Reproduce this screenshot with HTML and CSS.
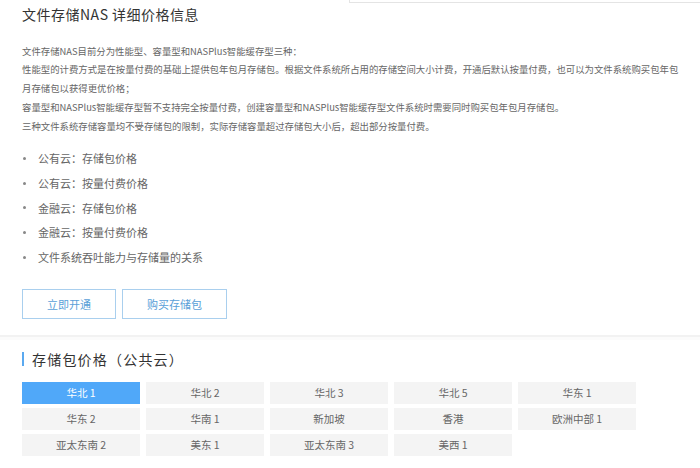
FILE: index.html
```html
<!DOCTYPE html>
<html lang="zh-CN">
<head>
<meta charset="utf-8">
<title>文件存储NAS 详细价格信息</title>
<link rel="stylesheet" href="styles.css">
</head>
<body>
<div class="top-strip"></div>
<div class="page">
  <h1 class="title">文件存储NAS 详细价格信息</h1>
  <div class="intro">
    <p>文件存储NAS目前分为性能型、容量型和NASPlus智能缓存型三种：</p>
    <p>性能型的计费方式是在按量付费的基础上提供包年包月存储包。根据文件系统所占用的存储空间大小计费，开通后默认按量付费，也可以为文件系统购买包年包月存储包以获得更优价格；</p>
    <p>容量型和NASPlus智能缓存型暂不支持完全按量付费，创建容量型和NASPlus智能缓存型文件系统时需要同时购买包年包月存储包。</p>
    <p>三种文件系统存储容量均不受存储包的限制，实际存储容量超过存储包大小后，超出部分按量付费。</p>
  </div>
  <ul class="links">
    <li>公有云：存储包价格</li>
    <li>公有云：按量付费价格</li>
    <li>金融云：存储包价格</li>
    <li>金融云：按量付费价格</li>
    <li>文件系统吞吐能力与存储量的关系</li>
  </ul>
  <div class="actions">
    <a class="btn">立即开通</a>
    <a class="btn">购买存储包</a>
  </div>
</div>
<div class="divider"></div>
<div class="page">
  <h2 class="section-title">存储包价格（公共云）</h2>
  <div class="regions">
    <div class="region active">华北 1</div>
    <div class="region">华北 2</div>
    <div class="region">华北 3</div>
    <div class="region">华北 5</div>
    <div class="region">华东 1</div>
    <div class="region">华东 2</div>
    <div class="region">华南 1</div>
    <div class="region">新加坡</div>
    <div class="region">香港</div>
    <div class="region">欧洲中部 1</div>
    <div class="region">亚太东南 2</div>
    <div class="region">美东 1</div>
    <div class="region">亚太东南 3</div>
    <div class="region">美西 1</div>
  </div>
</div>
</body>
</html>
```

FILE: styles.css
```css
html, body {
  margin: 0;
  padding: 0;
  background: #fff;
}
body {
  font-family: "Noto Sans CJK SC", "Noto Sans", sans-serif;
  color: #666;
  overflow: hidden;
}
.top-strip {
  margin-left: 349px;
  height: 2px;
  border-left: 1px solid #e4e4e4;
  border-bottom: 1px solid #e4e4e4;
}
.page {
  padding-left: 22px;
}
.title {
  margin: 1px 0 0;
  font-size: 14px;
  letter-spacing: 0.5px;
  line-height: 20px;
  font-weight: normal;
  color: #333;
}
.intro {
  margin-top: 17.6px;
  width: 664px;
  font-size: 9.4px;
  line-height: 18.8px;
  color: #666;
}
.intro p {
  margin: 0;
}
.links {
  list-style: none;
  margin: 10.8px 0 0;
  padding: 0;
  font-size: 11px;
  line-height: 24.6px;
  color: #666;
}
.links li {
  display: flex;
  align-items: center;
  gap: 12px;
}
.links li::before {
  content: "";
  width: 3px;
  height: 3px;
  border-radius: 50%;
  background: #888;
  margin-left: 1px;
}
.actions {
  display: flex;
  gap: 6px;
  margin-top: 19.7px;
}
.btn {
  display: block;
  height: 28px;
  line-height: 28px;
  padding: 0 24px;
  border: 1px solid #a9cfee;
  color: #5a9fd8;
  font-size: 11px;
  cursor: pointer;
}
.divider {
  margin-top: 16px;
  height: 2px;
  background: #f2f2f2;
  border-bottom: 3px solid #fbfbfb;
}
.section-title {
  margin: 10px 0 0;
  font-size: 14px;
  letter-spacing: 1.2px;
  line-height: 18px;
  font-weight: normal;
  color: #333;
  display: flex;
  align-items: center;
  gap: 8px;
}
.section-title::before {
  content: "";
  width: 2px;
  height: 14px;
  background: #5aa9f0;
}
.regions {
  margin-top: 13.7px;
  display: grid;
  grid-template-columns: repeat(5, 118px);
  column-gap: 6px;
  row-gap: 4px;
}
.region {
  height: 22px;
  line-height: 22px;
  text-align: center;
  background: #f4f4f4;
  color: #666;
  font-size: 10.5px;
}
.region.active {
  background: #50a8f9;
  color: #fff;
}
```
